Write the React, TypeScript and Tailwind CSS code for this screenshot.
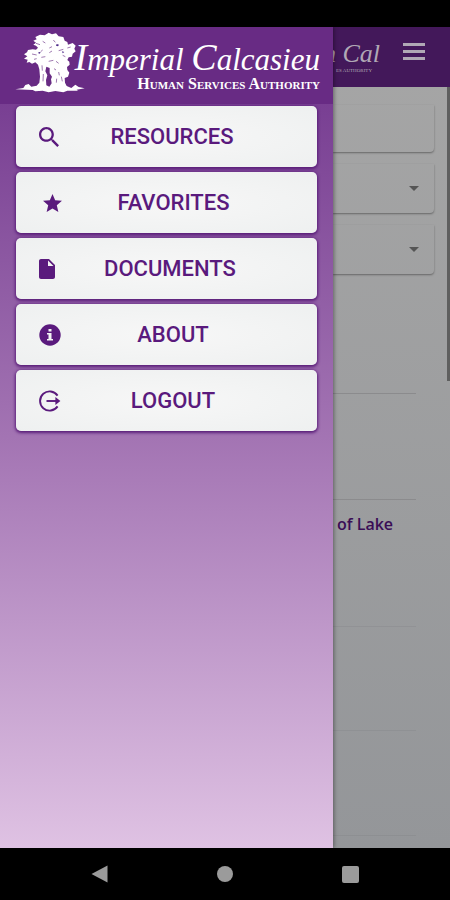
import type { ReactNode } from "react";

const TreeLogo = () => (
  <svg viewBox="0 0 240 210" className="w-20 h-[70px] shrink-0" fill="#fff" aria-hidden="true">
    <path d="M98 22L110 14L120 19L132 16L140 25L154 27L158 38L166 42L168 50L182 45L191 53L187 62L191 70L182 77L180 86L170 88L166 96L172 101L173 110L165 117L166 126L172 134L168 146L158 150L159 164L164 174L178 180L190 170L200 177L218 181L194 185L198 188L166 188L154 193L130 189L110 193L92 188L70 190L62 186L10 184L34 180L40 171L50 168L58 176L74 173L82 164L84 146L82 124L78 110L70 103L60 107L52 102L44 104L47 95L36 92L46 85L36 79L45 73L48 66L62 64L72 65L78 59L72 53L64 50L72 44L64 38L74 34L70 27L84 20Z" />
    <path d="M103 116L113 120L113 136L120 146L117 154L119 166L112 176L103 172L102 156L106 142L100 130Z" fill="#682b84" />
    <path
      d="M72 46L84 50M60 78L74 81M92 40L100 45M124 36L130 43M140 68L154 64M152 82L160 86M112 74L120 69M88 88L100 86M110 100L124 97M132 100L140 106M66 94L74 92M166 60L176 57M120 56L112 60M92 66L86 71M140 132L142 142M126 122L132 126M134 152L133 164M148 146L151 160M90 112L91 128M94 138L93 160"
      stroke="#a07bb2"
      strokeWidth="3"
      fill="none"
    />
    <path d="M134 48L141 50L138 55L132 53ZM80 72L86 73L83 77L79 76ZM150 70L157 72L152 76Z" fill="#4d2a8a" />
  </svg>
);

const items: { label: string; icon: ReactNode }[] = [
  {
    label: "RESOURCES",
    icon: (
      <svg viewBox="3 3 17.5 17.5" className="w-5 h-5" fill="currentColor">
        <path d="M15.5 14h-.79l-.28-.27C15.41 12.59 16 11.11 16 9.5 16 5.91 13.09 3 9.5 3S3 5.91 3 9.5 5.91 16 9.5 16c1.61 0 3.09-.59 4.23-1.57l.27.28v.79l5 4.99L20.49 19l-4.99-5zm-6 0C7.01 14 5 11.99 5 9.5S7.01 5 9.5 5 14 7.01 14 9.5 11.99 14 9.5 14z" />
      </svg>
    ),
  },
  {
    label: "FAVORITES",
    icon: (
      <svg viewBox="2 2 20 19" className="ml-1 w-[19px] h-[18px]" fill="currentColor">
        <path d="M12 17.27L18.18 21l-1.64-7.03L22 9.24l-7.19-.61L12 2 9.19 8.63 2 9.24l5.46 4.73L5.82 21z" />
      </svg>
    ),
  },
  {
    label: "DOCUMENTS",
    icon: (
      <svg viewBox="4 2 16 20" className="w-4 h-5" fill="currentColor">
        <path d="M6 2c-1.1 0-2 .9-2 2v16c0 1.1.9 2 2 2h12c1.1 0 2-.9 2-2V8l-6-6H6zm7 7V3.5L18.5 9H13z" />
      </svg>
    ),
  },
  {
    label: "ABOUT",
    icon: (
      <svg viewBox="0 0 22 22" className="w-[22px] h-[22px]" fill="currentColor">
        <circle cx="11" cy="11" r="10.7" />
        <path d="M9.5 5h3v2.6h-3zM8 9h4.5v6H14v1.6H8V15h1.5v-4.4H8z" fill="#f2f3f3" />
      </svg>
    ),
  },
  {
    label: "LOGOUT",
    icon: (
      <svg viewBox="0 0 22 22" className="w-[22px] h-[22px]" fill="none" stroke="currentColor" strokeWidth="1.9">
        <path d="M18.6 5.6a9.6 9.6 0 1 0 0 10.8" />
        <path d="M7.5 11h10" />
        <path d="M16.4 7l5 4-5 4z" fill="currentColor" stroke="none" />
      </svg>
    ),
  },
];

const Drawer = () => (
  <aside className="relative z-10 w-[74%] shrink-0 flex flex-col bg-linear-to-b from-[#6f328b] via-[#a374b3] via-50% to-[#dfc2e3] shadow-[1px_0_4px_rgba(0,0,0,0.4)]">
    <header className="flex items-start h-[77px] pl-3 pr-[13px] pt-px bg-[#682b84] text-white font-['Liberation_Serif',serif]">
      <TreeLogo />
      <div className="flex-1 min-w-0 flex flex-col items-end pt-[11px] whitespace-nowrap">
        <h1 className="text-[31px] leading-9 italic">
          <span className="text-[38px] leading-9">I</span>mperial{" "}
          <span className="text-[38px] leading-9">C</span>alcasieu
        </h1>
        <p className="text-base leading-3 font-bold [font-variant:small-caps]">Human Services Authority</p>
      </div>
    </header>
    <nav className="flex flex-col gap-[5px] px-4 pt-[2px]">
      {items.map((item) => (
        <button
          key={item.label}
          className="flex items-center h-[61px] pl-[23px] pr-8 rounded-[5px] bg-radial from-[#f7f7f7] to-[#eef0f0] text-[#5a1a7d] shadow-[0_1px_3px_1px_#5a1e79]"
        >
          {item.icon}
          <span className="flex-1 text-center text-[22px] leading-7 font-medium">{item.label}</span>
        </button>
      ))}
    </nav>
  </aside>
);

const Page = () => (
  <main className="flex-1 min-w-0 flex flex-col overflow-hidden bg-linear-to-b from-[#a6a6a6] to-[#949699]">
    <header className="flex items-center justify-end gap-[23px] h-[60px] pr-[25px] bg-[#43185a] text-[#b0a8b5]">
      <div className="flex flex-col items-end font-['Liberation_Serif',serif] whitespace-nowrap">
        <span className="text-[26px] leading-7 italic">n Cal</span>
        <span className="pr-2 text-[5px] leading-[6px]">ES AUTHORITY</span>
      </div>
      <button aria-label="Menu" className="mb-3 flex flex-col gap-1">
        <span className="w-[22px] h-[3px] bg-[#b0a8b5]" />
        <span className="w-[22px] h-[3px] bg-[#b0a8b5]" />
        <span className="w-[22px] h-[3px] bg-[#b0a8b5]" />
      </button>
    </header>
    <div className="flex-1 flex">
      <div className="flex-1 min-w-0 flex flex-col">
        <div className="flex flex-col gap-3 pt-[18px] pr-[13px]">
          <input aria-label="Search" className="w-full h-[47px] rounded-br-sm shadow-[0_1px_2px_#666]" />
          {["Category", "Location"].map((name) => (
            <button
              key={name}
              aria-label={name}
              className="flex items-center justify-end h-[49px] pr-[15px] rounded-br-sm shadow-[0_1px_2px_#666]"
            >
              <svg viewBox="0 0 10 5" className="w-[10px] h-[5px]" fill="#555">
                <path d="M0 0h10L5 5z" />
              </svg>
            </button>
          ))}
        </div>
        <ul className="pt-px pr-[31px] font-['Open_Sans',sans-serif] text-base text-[#3a0d56]">
          <li className="h-[119px] border-b border-[#8b8b8d]" />
          <li className="h-[106px] border-b border-[#8b8b8d]" />
          <li className="h-[127px] pt-3 pl-1 leading-6 font-semibold border-b border-[#919295]">of Lake</li>
          <li className="h-[104px] border-b border-[#8f9194]" />
          <li className="h-[105px] border-b border-[#8d8f92]" />
        </ul>
      </div>
      <div className="w-[3px] h-[294px] bg-[#5f5f5f]" />
    </div>
  </main>
);

const SystemBar = () => (
  <footer className="h-[52px] px-[91px] flex items-center justify-between bg-black text-[#9b9b9b]">
    <button aria-label="Back">
      <svg viewBox="0 0 17 18" className="w-[17px] h-[18px]" fill="currentColor">
        <path d="M16.5.5v17L.5 9z" />
      </svg>
    </button>
    <button aria-label="Home" className="size-4 rounded-full bg-current" />
    <button aria-label="Recent apps" className="size-[17px] rounded-xs bg-current" />
  </footer>
);

const App = () => {
  return (
    <div className="min-h-screen flex flex-col bg-black font-[Roboto,sans-serif]">
      <div className="h-[27px]" />
      <div className="flex-1 flex">
        <Drawer />
        <Page />
      </div>
      <SystemBar />
    </div>
  );
};

export default App;
